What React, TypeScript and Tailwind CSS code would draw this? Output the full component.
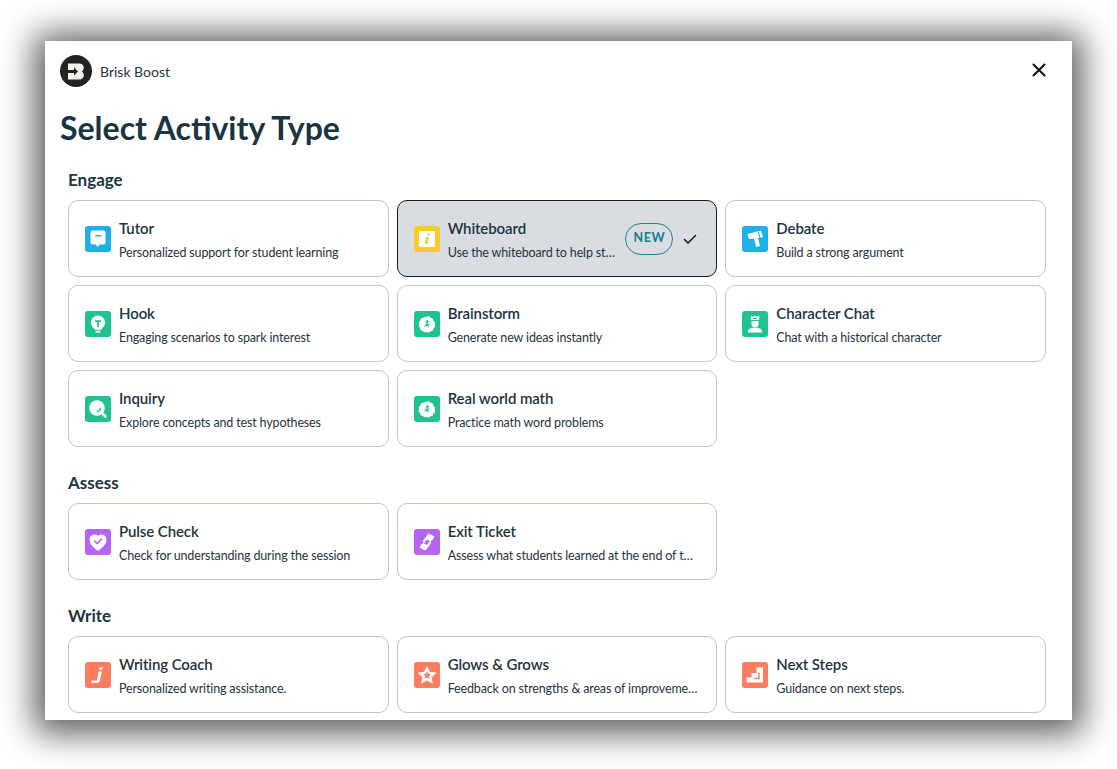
import React from "react";

type IconProps = { bg: string; children: React.ReactNode };
function IconBox({ bg, children }: IconProps) {
  return (
    <svg viewBox="0 0 26 26" className="w-[26px] h-[26px] shrink-0">
      <rect x="0" y="0" width="26" height="26" rx="3" fill={bg} />
      {children}
    </svg>
  );
}

const BLUE = "#1fb0e9";
const YEL = "#fdc92f";
const GRN = "#1fc290";
const PUR = "#b565f2";
const ORG = "#ff7c5e";

const icons: Record<string, React.ReactNode> = {
  tutor: (
    <IconBox bg={BLUE}>
      <path d="M8 4.500h10a2.500 2.500 0 0 1 2.500 2.500v9a2.500 2.500 0 0 1-2.500 2.500h-3.500l-2 2.500-1.500-2.500H8A2.500 2.500 0 0 1 5.500 16V7A2.500 2.500 0 0 1 8 4.500z" fill="#fff" />
      <rect x="10" y="9" width="6.500" height="1.500" rx=".7" fill={BLUE} />
    </IconBox>
  ),
  whiteboard: (
    <IconBox bg={YEL}>
      <rect x="5" y="5" width="16" height="16" rx="1" fill="#fff" />
      <path d="M13.700 7.800l2.300-.5-.5 2.300-2.300.4zM12.300 11h2.600l-1.500 7h-2.600z" fill={YEL} />
    </IconBox>
  ),
  bulb: (
    <IconBox bg={GRN}>
      <path d="M13 4.500a7 7 0 0 1 7 7c0 2.200-1 4-2.500 5.300-.6.500-1 1.200-1.100 2H9.600c-.1-.8-.5-1.500-1.100-2C7 15.500 6 13.700 6 11.500a7 7 0 0 1 7-7z" fill="#fff" />
      <rect x="10.500" y="19.800" width="5" height="2" rx="1" fill="#fff" />
      <path d="M10 9.300h6v1.800h-2.100V16h-1.800v-4.900H10z" fill={GRN} />
    </IconBox>
  ),
  burst: (
    <IconBox bg={GRN}>
      <path d="M13 5.500c1.600-.6 3.200.1 3.800 1.500 1.600 0 2.900 1.300 2.800 2.900 1.300.8 1.900 2.400 1.200 3.800.6 1.500 0 3-1.300 3.800 0 1.600-1.300 2.800-2.900 2.700-1 1.200-2.600 1.600-4 .8-1.400.7-3 .2-3.800-1-1.600 0-2.900-1.300-2.700-2.900-1.300-.9-1.800-2.500-1.100-3.900-.6-1.500 0-3 1.300-3.700-.1-1.600 1.200-2.900 2.800-2.800.9-1 2.400-1.400 3.900-.7z" fill="#fff" />
      <path d="M12.300 8.800l3.200 1.700-2.400 2.300h3.700l-2.800 1.300 1.200 3-2.800-2.300-3 1.200 2.900-3.300z" fill={GRN} />
    </IconBox>
  ),
  inquiry: (
    <IconBox bg={GRN}>
      <circle cx="12" cy="12" r="7.800" fill="#fff" />
      <path d="M16.500 16.500l4 4" stroke="#fff" strokeWidth="2.600" strokeLinecap="round" />
      <path d="M12.500 15.500a4 4 0 0 0 3-3" stroke={GRN} strokeWidth="1.400" fill="none" strokeLinecap="round" />
    </IconBox>
  ),
  debate: (
    <IconBox bg={BLUE}>
      <path d="M5.500 8l13.500-3.500 2 6.700-8.200 1.400L16 12l2 8-3.800 1-2.200-8.200-5 .3z" fill="#fff" />
      <path d="M16.300 6l1.700 6" stroke={BLUE} strokeWidth="1.100" />
    </IconBox>
  ),
  character: (
    <IconBox bg={GRN}>
      <path d="M8.800 4.500l1.700 1.200L13 4.500l2.500 1.200 1.700-1.200v4.500H8.800z" fill="#fff" />
      <path d="M9.500 10h7v3a3.500 3.500 0 0 1-7 0z" fill="#fff" />
      <path d="M6 21.500v-1.500c0-1.800 2.500-3.300 7-3.300s7 1.500 7 3.300v1.500z" fill="#fff" />
      <rect x="11" y="7" width="4" height="1.200" fill={GRN} />
    </IconBox>
  ),
  pulse: (
    <IconBox bg={PUR}>
      <path d="M13 22C9 19 4.500 15.500 4.500 10.500A5 5 0 0 1 13 7a5 5 0 0 1 8.500 3.500C21.500 15.500 17 19 13 22z" fill="#fff" />
      <path d="M9.500 12l2.700 2.600 4.300-4.500" stroke={PUR} strokeWidth="1.500" fill="none" strokeLinecap="round" strokeLinejoin="round" />
    </IconBox>
  ),
  ticket: (
    <IconBox bg={PUR}>
      <path d="M14.500 4.500l6 3-2 3.500a2 2 0 0 0-1.500 3.200L11.500 21.500l-6-3 2-3.500A2 2 0 0 0 9 11.800z" fill="#fff" />
      <path d="M12.800 10.500l3 1.600-2.800 4-3-1.600z" fill={PUR} />
    </IconBox>
  ),
  writing: (
    <IconBox bg={ORG}>
      <path d="M14.500 5.500l3.500-.8-.8 3-3.200.4zM13.500 9.500h3.300l-1.700 8.500c-.4 2-1.700 3-3.700 3H6.500v-2.600h4.800c.5 0 .8-.3.900-.8z" fill="#fff" />
    </IconBox>
  ),
  star: (
    <IconBox bg={ORG}>
      <path d="M13 3.800l2.900 6 6.500.9-4.700 4.500 1.100 6.500L13 18.600l-5.800 3.100 1.100-6.500-4.700-4.500 6.500-.9z" fill="#fff" />
      <path d="M13 9.200l1.200 2.500 2.700.4-2 1.900.5 2.700-2.400-1.300-2.400 1.300.5-2.700-2-1.900 2.700-.4z" fill={ORG} />
    </IconBox>
  ),
  steps: (
    <IconBox bg={ORG}>
      <path d="M21 5.500v15H4.500v-5H9.500v-4.500H14.500V5.500z" fill="#fff" />
      <path d="M17 10.500v6h-5" stroke={ORG} strokeWidth="1.400" fill="none" />
    </IconBox>
  ),
};

type Item = { title: string; desc: string; icon: string; selected?: boolean };

function Card({ title, desc, icon, selected }: Item) {
  return (
    <div
      className={
        "h-[77px] rounded-[10px] border flex items-center pl-4 pr-[18px] gap-2 " +
        (selected ? "bg-[#d9dde1] border-[#14181c]" : "bg-white border-[#bfc6d1]")
      }
    >
      {icons[icon]}
      <div className="flex flex-col min-w-0 flex-1 gap-[5px] pt-[3px]">
        <div className="text-[15px] leading-[19px] font-semibold tracking-[-0.1px] text-[#1b3442] truncate">{title}</div>
        <div className="text-[12.5px] leading-[19px] tracking-[-0.15px] text-[#1f3541] truncate">{desc}</div>
      </div>
      {selected && (
        <>
          <span className="w-[48px] h-[32px] shrink-0 rounded-full border border-[#1c8391] flex items-center justify-center text-[#137f8d] text-[12.5px] font-bold tracking-[0.5px]">
            NEW
          </span>
          <svg viewBox="0 0 16 16" className="w-4 h-4 ml-[1px] shrink-0" fill="none" stroke="#14181c" strokeWidth="1.500" strokeLinecap="round" strokeLinejoin="round">
            <path d="M2.500 8.500l3.500 3.500 7.500-7.500" />
          </svg>
        </>
      )}
    </div>
  );
}

function Section({ title, items, gapTop }: { title: string; items: Item[]; gapTop: string }) {
  return (
    <section className={gapTop}>
      <h2 className="h-[20px] leading-[20px] text-[17px] font-bold text-[#1b3442] mb-[10px]">{title}</h2>
      <div className="grid grid-cols-3 gap-2">
        {items.map((it) => (
          <Card key={it.title} {...it} />
        ))}
      </div>
    </section>
  );
}

export default function App() {
  return (
    <div className="w-[1117px] h-[769px] bg-white pl-[45px] pt-[41px] overflow-hidden" style={{ fontFamily: "Lato, 'Noto Sans', sans-serif" }}>
      <div className="w-[1027px] h-[679px] bg-white overflow-hidden shadow-[0_3px_32px_10px_rgba(0,0,0,0.65)]">
        <header className="flex items-center h-[60px] pl-[15px] pr-[25px]">
          <svg viewBox="0 0 32 32" className="w-8 h-8 shrink-0">
            <circle cx="16" cy="16" r="16" fill="#232323" />
            <path d="M8 8.500h11.500a4.200 4.200 0 0 1 3.800 6.200l-1.300 1.800 1.300 1.800a4.200 4.200 0 0 1-3.800 6.200H8z" fill="#f2f1ec" />
            <path d="M7.500 15h6.500v-2.600l4 4.100-4 4.100V18H7.500z" fill="#232323" />
          </svg>
          <span className="ml-2 text-[14px] text-[#1f3541]">Brisk Boost</span>
          <svg viewBox="0 0 16 16" className="w-4 h-4 ml-auto -mt-[2px]" fill="none" stroke="#0e0e0e" strokeWidth="2" strokeLinecap="round">
            <path d="M2.500 2.500l11 11M13.500 2.500l-11 11" />
          </svg>
        </header>
        <h1 className="ml-[15px] mt-[7px] h-[40px] leading-[40px] text-[32px] font-bold text-[#1b3442]">Select Activity Type</h1>
        <div className="pl-[23px] pr-[26px] mt-[22px]">
          <Section
            title="Engage"
            gapTop=""
            items={[
              { title: "Tutor", desc: "Personalized support for student learning", icon: "tutor" },
              { title: "Whiteboard", desc: "Use the whiteboard to help students learn", icon: "whiteboard", selected: true },
              { title: "Debate", desc: "Build a strong argument", icon: "debate" },
              { title: "Hook", desc: "Engaging scenarios to spark interest", icon: "bulb" },
              { title: "Brainstorm", desc: "Generate new ideas instantly", icon: "burst" },
              { title: "Character Chat", desc: "Chat with a historical character", icon: "character" },
              { title: "Inquiry", desc: "Explore concepts and test hypotheses", icon: "inquiry" },
              { title: "Real world math", desc: "Practice math word problems", icon: "burst" },
            ]}
          />
          <Section
            title="Assess"
            gapTop="mt-[26px]"
            items={[
              { title: "Pulse Check", desc: "Check for understanding during the session", icon: "pulse" },
              { title: "Exit Ticket", desc: "Assess what students learned at the end of the lesson", icon: "ticket" },
            ]}
          />
          <Section
            title="Write"
            gapTop="mt-[26px]"
            items={[
              { title: "Writing Coach", desc: "Personalized writing assistance.", icon: "writing" },
              { title: "Glows & Grows", desc: "Feedback on strengths & areas of improvement", icon: "star" },
              { title: "Next Steps", desc: "Guidance on next steps.", icon: "steps" },
            ]}
          />
        </div>
      </div>
    </div>
  );
}
